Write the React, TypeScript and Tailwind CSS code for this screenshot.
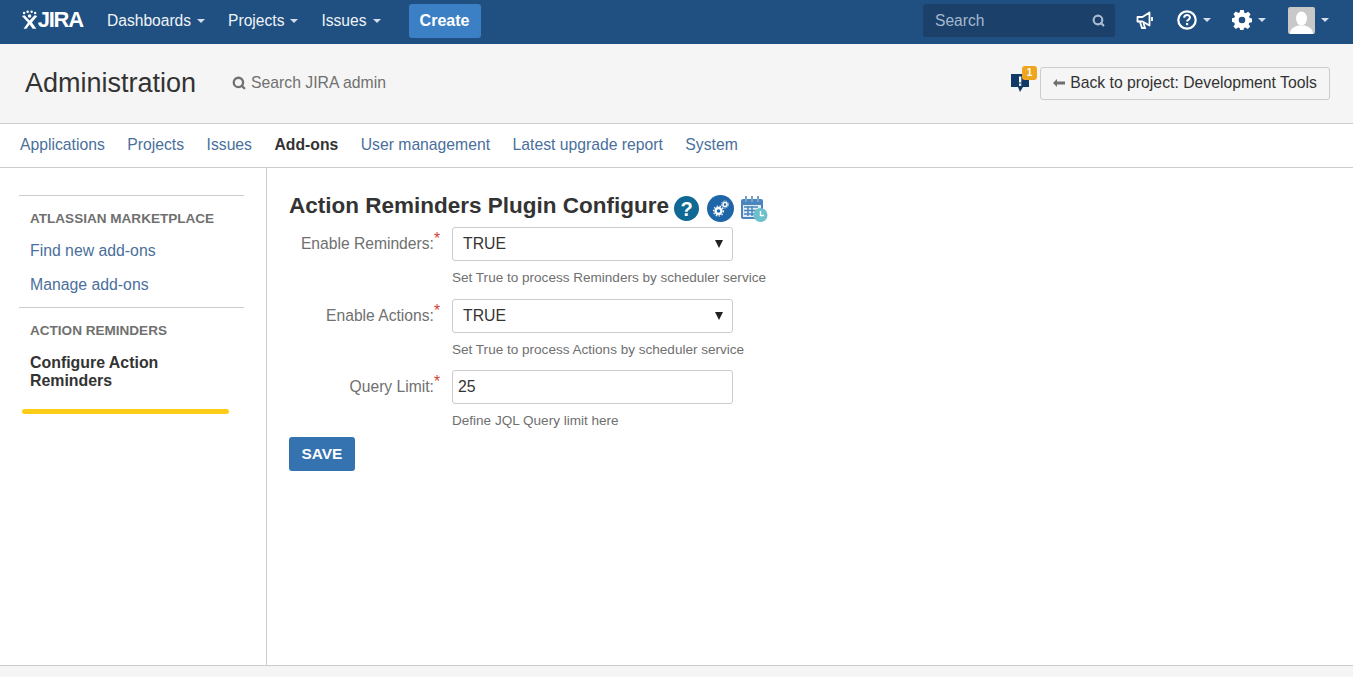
import React from 'react';
import { Search } from 'lucide-react';

const Caret = () => (
  <span className="ml-[6px] inline-block h-0 w-0 border-x-[4.5px] border-t-[4.5px] border-x-transparent border-t-[#d5dfeb]" />
);

function JiraMark() {
  return (
    <svg width="20" height="22" viewBox="0 0 20 22" fill="white" aria-hidden="true">
      <circle cx="3.5" cy="3" r="1.4" />
      <circle cx="7.5" cy="1.6" r="1.4" />
      <circle cx="12" cy="1.6" r="1.4" />
      <circle cx="16" cy="3" r="1.4" />
      <path d="M1 6.5l3-1 5.7 6.2 5.7-6.2 3 1-6 7.2 5 7.3h-4.2l-3.5-5-3.5 5H2.9l5-7.3z" />
      <circle cx="9.7" cy="6.4" r="2" />
    </svg>
  );
}

function TopBar() {
  return (
    <header className="flex h-11 items-center bg-[#205081] pb-[4px] text-[15.6px] text-[#f0f4f8]">
      <div className="ml-[21px] flex w-[62px] items-center">
        <JiraMark />
        <span className="ml-[-1px] text-[22px] leading-none font-bold tracking-[-1.2px] text-white">JIRA</span>
      </div>
      <nav className="mt-[2px] ml-6 flex items-center">
        <a className="flex items-center">Dashboards<Caret /></a>
        <a className="ml-[23px] flex items-center">Projects<Caret /></a>
        <a className="ml-[23px] flex items-center">Issues<Caret /></a>
      </nav>
      <button className="mt-[2px] ml-[28px] h-[34px] w-[72px] rounded-[3px] bg-[#3b7fc4] text-[16px] font-bold text-white">Create</button>
      <div className="ml-auto flex items-center">
        <div className="flex h-[33px] w-[192px] items-center justify-between rounded-[3px] bg-[#1b406a] pt-[1px] pr-[10px] pl-3 text-[#a3b8cf]">
          <span>Search</span>
          <Search size={13} strokeWidth={4} className="text-[#a9bbd0]" />
        </div>
        <svg className="ml-[21px]" width="19" height="18" viewBox="0 0 19 18" fill="none" stroke="white" strokeWidth="1.800" aria-hidden="true">
          <path d="M1.500 6h5l7-4.500v13L6.500 10.500h-5z" strokeLinejoin="round" />
          <path d="M4 11l2 6h3l-1.500-5M16 6v4" />
        </svg>
        <div className="ml-[22px] flex items-center">
          <svg width="20" height="20" viewBox="0 0 20 20" fill="none" aria-hidden="true">
            <circle cx="10" cy="10" r="8.700" stroke="white" strokeWidth="2.200" />
            <path d="M7.200 7.800c0-3.600 5.800-3.600 5.800-.2 0 2-2.900 2-2.900 4" stroke="white" strokeWidth="2" />
            <rect x="9" y="13" width="2.200" height="2.200" fill="white" />
          </svg>
          <Caret />
        </div>
        <div className="ml-[21px] flex items-center">
          <svg width="20" height="20" viewBox="0 0 20 20" fill="white" aria-hidden="true">
            <path fillRule="evenodd" d="M8.200 0h3.600l.5 2.700 1.500.6 2.300-1.500 2.500 2.500-1.500 2.300.6 1.500 2.300.5v3.600l-2.700.5-.6 1.500 1.500 2.300-2.500 2.500-2.300-1.500-1.500.6-.5 2.700H8.200l-.5-2.700-1.500-.6-2.300 1.500-2.500-2.500 1.500-2.300-.6-1.500L0 11.800V8.200l2.300-.5.600-1.500-1.500-2.300 2.500-2.500 2.300 1.500 1.500-.6zM10 6.700a3.300 3.300 0 100 6.600 3.300 3.300 0 000-6.600z" />
          </svg>
          <Caret />
        </div>
        <div className="mr-[24px] ml-[22px] flex items-center">
          <div className="flex h-[27px] w-[27px] items-end justify-center overflow-hidden rounded-[2px] bg-[#c8c8c8]">
            <svg width="23" height="24" viewBox="0 0 23 24" fill="white" aria-hidden="true">
              <ellipse cx="11.500" cy="8.500" rx="5.500" ry="7" />
              <path d="M0 24c0-6 5-7 8-8.500h7c3 1.500 8 2.500 8 8.500z" />
            </svg>
          </div>
          <Caret />
        </div>
      </div>
    </header>
  );
}

function PageHeader() {
  return (
    <div className="flex h-[80px] items-center border-b border-[#cccccc] bg-[#f5f5f5] pr-[23px] pl-[25px]">
      <h1 className="text-[27px] leading-none text-[#333333]">Administration</h1>
      <div className="ml-[36px] flex items-center pb-[2px] text-[15.75px] text-[#707070]">
        <Search size={14} strokeWidth={4} className="mr-[5px] text-[#707070]" />
        Search JIRA admin
      </div>
      <div className="relative mr-[11px] ml-auto h-[24px] w-[19px]">
        <svg className="absolute top-[1px] left-[1px]" width="19" height="21" viewBox="0 0 19 21" aria-hidden="true">
          <path d="M0 1h18v13h-6l-3 5-2-5H0z" fill="#123a66" />
          <rect x="8" y="3.500" width="2.300" height="6" fill="white" />
          <rect x="8" y="10.500" width="2.300" height="2.300" fill="white" />
        </svg>
        <span className="absolute top-[-6px] left-[12px] flex h-[14px] w-[15px] items-center justify-center rounded-[3px] bg-[#f0a51e] text-[10px] font-bold text-white">1</span>
      </div>
      <button className="flex h-[33px] w-[290px] items-center justify-center rounded-[3px] border border-[#cccccc] bg-[#f5f5f5] pb-[2px] text-[15.75px] text-[#333333]">
        <svg className="mr-[5px]" width="12" height="8" viewBox="0 0 12 8" fill="#707070" aria-hidden="true">
          <path d="M0 4l4-4v2.500h8v3H4V8z" />
        </svg>
        Back to project: Development Tools
      </button>
    </div>
  );
}

const tabs = ['Applications', 'Projects', 'Issues', 'Add-ons', 'User management', 'Latest upgrade report', 'System'];

function Tabs() {
  return (
    <nav className="flex h-[44px] items-center gap-[22.5px] border-b border-[#cccccc] pb-[1px] pl-[20px] text-[15.72px]">
      {tabs.map((t) => (
        <a key={t} className={t === 'Add-ons' ? 'font-bold text-[#333333]' : 'text-[#4a6f9c]'}>{t}</a>
      ))}
    </nav>
  );
}

function Sidebar() {
  return (
    <aside className="w-[267px] shrink-0 border-r border-[#cccccc] pt-[27px] pl-[19px]">
      <div className="w-[225px] border-t border-[#cccccc] pt-[14px] pb-[13px] pl-[11px]">
        <h3 className="text-[13.55px] leading-[17px] font-bold text-[#707070]">ATLASSIAN MARKETPLACE</h3>
        <a className="mt-[15px] block text-[15.8px] leading-[18px] text-[#4a6f9c]">Find new add-ons</a>
        <a className="mt-4 block text-[15.8px] leading-[18px] text-[#4a6f9c]">Manage add-ons</a>
      </div>
      <div className="w-[225px] border-t border-[#cccccc] pt-[14px] pl-[11px]">
        <h3 className="text-[13.55px] leading-[17px] font-bold text-[#707070]">ACTION REMINDERS</h3>
        <a className="mt-[15px] block w-[170px] text-[15.9px] leading-[18px] font-bold text-[#333333]">Configure Action Reminders</a>
      </div>
      <div className="mt-[19px] ml-[3px] h-[5px] w-[207px] rounded-full bg-[#ffcc18]" />
    </aside>
  );
}

function Field({ label, hint, className, children }: { label: string; hint: string; className?: string; children: React.ReactNode }) {
  return (
    <div className={`flex items-start ${className ?? ''}`}>
      <label className="mt-[7px] w-[153px] shrink-0 pr-[2px] text-right text-[15.65px] leading-[20px] text-[#707070]">
        {label}:<span className="relative top-[-5px] text-[#d04437]">*</span>
      </label>
      <div className="ml-[10px]">
        {children}
        <p className="mt-[8px] h-[17px] text-[13.55px] leading-[17px] text-[#707070]">{hint}</p>
      </div>
    </div>
  );
}

function FakeSelect() {
  return (
    <div className="flex h-[34px] w-[281px] items-center justify-between rounded-[3px] border border-[#cccccc] bg-white pr-[9px] pl-[10px] text-[15.8px] text-[#333333]">
      TRUE
      <span className="h-0 w-0 border-x-[4px] border-t-[8px] border-x-transparent border-t-[#222222]" />
    </div>
  );
}

function Content() {
  return (
    <main className="flex-1 pt-[21px] pl-[22px]">
      <div className="flex h-[33px] items-center">
        <h2 className="text-[22.5px] leading-[27px] font-bold text-[#333333]">Action Reminders Plugin Configure</h2>
        <span className="mt-[6px] ml-[5px] flex h-[25px] w-[25px] items-center justify-center rounded-full bg-[#0e6a94] text-[20px] font-bold text-white">?</span>
        <span className="mt-[6px] ml-[8px] flex h-[27px] w-[27px] items-center justify-center rounded-full bg-[#1e66a8]">
          <svg width="18" height="18" viewBox="0 0 18 18" fill="white" aria-hidden="true">
            <circle cx="6.500" cy="11" r="3" fill="none" stroke="white" strokeWidth="2.400" />
            <circle cx="6.500" cy="11" r="5" fill="none" stroke="white" strokeWidth="1.200" strokeDasharray="1.500 1.500" />
            <circle cx="13" cy="4.500" r="2" fill="none" stroke="white" strokeWidth="1.600" />
            <circle cx="13" cy="4.500" r="3.500" fill="none" stroke="white" strokeWidth="1" strokeDasharray="1.200 1.200" />
          </svg>
        </span>
        <svg className="mt-[7px] ml-[6px]" width="28" height="28" viewBox="0 0 28 28" aria-hidden="true">
          <rect x="1" y="4" width="22" height="20" rx="2" fill="#4a86bd" />
          <rect x="3" y="10" width="18" height="12" fill="#e3ecf5" />
          <rect x="5" y="1" width="2" height="6" fill="#7aa3cb" />
          <rect x="11" y="1" width="2" height="6" fill="#7aa3cb" />
          <rect x="17" y="1" width="2" height="6" fill="#7aa3cb" />
          <path d="M4 12h14M4 15.500h14M4 19h14M8 11v10M12 11v10" stroke="#4a86bd" strokeWidth="1.500" />
          <circle cx="20.500" cy="20" r="7" fill="#6cc1cc" />
          <path d="M20.500 16v4.500h3.500" fill="none" stroke="white" strokeWidth="1.400" />
        </svg>
      </div>
      <div className="mt-[5px] flex flex-col gap-[13px]">
        <Field label="Enable Reminders" hint="Set True to process Reminders by scheduler service"><FakeSelect /></Field>
        <Field label="Enable Actions" hint="Set True to process Actions by scheduler service"><FakeSelect /></Field>
        <Field label="Query Limit" hint="Define JQL Query limit here" className="mt-[-1px]">
          <div className="flex h-[34px] w-[281px] items-center rounded-[3px] border border-[#cccccc] bg-white pl-[5px] text-[15.8px] text-[#333333]">25</div>
        </Field>
      </div>
      <button className="mt-[8px] h-[34px] w-[66px] rounded-[3px] bg-[#3572b0] pb-[1px] text-[15.4px] font-bold text-white">SAVE</button>
    </main>
  );
}

export default function App() {
  return (
    <div className="flex h-[677px] flex-col overflow-hidden bg-white font-['Liberation_Sans',Arial,sans-serif]">
      <TopBar />
      <PageHeader />
      <Tabs />
      <div className="flex h-[497px]">
        <Sidebar />
        <Content />
      </div>
      <footer className="flex-1 border-t border-[#cccccc] bg-[#f5f5f5]" />
    </div>
  );
}
